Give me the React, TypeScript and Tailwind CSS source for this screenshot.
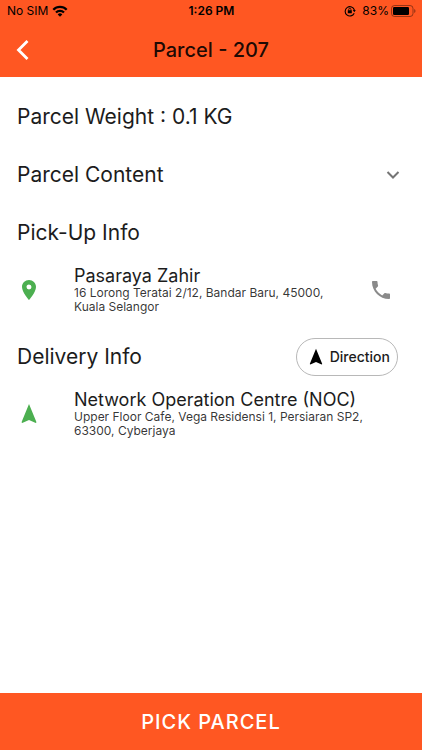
import type { ReactNode } from "react";
import { MdLocationOn, MdNavigation, MdPhone } from "react-icons/md";

function StatusBar() {
  return (
    <div className="grid h-[22px] grid-cols-3 items-center pr-[6px] pl-[7px] text-xs leading-4 text-black">
      <div className="flex items-center gap-1">
        <span>No SIM</span>
        <svg viewBox="0 0 16 12" className="h-3 w-4" aria-label="Wi-Fi">
          <g fill="none" stroke="currentColor" strokeWidth="2.300">
            <path d="M1.3 4.7a9.5 9.5 0 0 1 13.4 0" />
            <path d="M4 7.5a5.6 5.6 0 0 1 8 0" />
          </g>
          <path d="M8 11.7 5.7 9.4a3.2 3.2 0 0 1 4.6 0z" fill="currentColor" />
        </svg>
      </div>
      <span className="text-center font-semibold">1:26 PM</span>
      <div className="flex items-center justify-end">
        <svg viewBox="0 0 12 12" className="mr-[6px] h-3 w-3" aria-label="Rotation lock">
          <g fill="none" stroke="currentColor">
            <path d="M10.2 8.2A4.7 4.7 0 1 1 10.4 5" strokeWidth="1.1" />
            <path d="M4.7 5.6V4.4a1.1 1.1 0 0 1 2.2 0v1.2" strokeWidth=".8" />
          </g>
          <path d="M3.8 5.3h4v3h-4zM8.8 5h3L10.3 7.2z" fill="currentColor" />
        </svg>
        <span className="mr-[2px]">83%</span>
        <svg viewBox="0 0 25 12" className="h-3 w-[25px]" aria-label="Battery">
          <rect x=".5" y=".5" width="21.5" height="11" rx="3" fill="none" stroke="currentColor" strokeOpacity=".4" />
          <rect x="2" y="2" width="16" height="8" rx="1.2" fill="currentColor" />
          <path d="M23.3 4v4c1.5-.6 1.5-3.400 0-4z" fill="currentColor" fillOpacity=".5" />
        </svg>
      </div>
    </div>
  );
}

type StopProps = {
  icon: ReactNode;
  name: string;
  address: string;
  action?: ReactNode;
};

function Stop({ icon, name, address, action }: StopProps) {
  return (
    <div className="flex items-center px-[17px]">
      <div className="w-[57px] shrink-0">{icon}</div>
      <div className="min-w-0 flex-1 pr-5">
        <h3 className="text-lg leading-5">{name}</h3>
        <p className="text-xs leading-[14px] text-black/80">{address}</p>
      </div>
      {action}
    </div>
  );
}

export default function App() {
  return (
    <div className="flex min-h-screen flex-col bg-white font-['Inter',sans-serif] text-[#1c1c1c]">
      <header className="bg-[#ff5722]">
        <StatusBar />
        <div className="grid h-[55px] grid-cols-[1fr_auto_1fr] items-center px-4 text-black/90">
          <button type="button" aria-label="Back" className="justify-self-start text-white">
            <svg viewBox="0 0 14 24" className="h-6 w-[14px]" fill="none" stroke="currentColor" strokeWidth="2.800">
              <path d="M11.500 3 2.500 12l9 9" />
            </svg>
          </button>
          <h1 className="text-xl font-medium">Parcel - 207</h1>
        </div>
      </header>

      <main className="flex-1 pt-[11px]">
        <h2 className="flex h-[58px] items-center px-[17px] text-[21px] leading-7">Parcel Weight : 0.1 KG</h2>
        <button type="button" className="flex h-[58px] w-full items-center justify-between px-[17px] text-[21px] leading-7">
          Parcel Content
          <svg viewBox="0 0 24 24" className="size-6 text-[#757575]" fill="none" stroke="currentColor" strokeWidth="2">
            <path d="m6.500 9 5.500 5.500L17.500 9" />
          </svg>
        </button>
        <section>
          <h2 className="flex h-[58px] items-center px-[17px] text-[21px] leading-7">Pick-Up Info</h2>
          <div className="pt-1">
            <Stop
              icon={<MdLocationOn className="size-6 text-[#4caf50]" />}
              name="Pasaraya Zahir"
              address="16 Lorong Teratai 2/12, Bandar Baru, 45000, Kuala Selangor"
              action={
                <button type="button" aria-label="Call" className="mr-3 text-[#8a8a8a]">
                  <MdPhone className="size-6" />
                </button>
              }
            />
          </div>
        </section>
        <section className="pt-[10px]">
          <div className="flex h-[66px] items-center justify-between pr-6 pl-[17px]">
            <h2 className="text-[21px] leading-7">Delivery Info</h2>
            <button
              type="button"
              className="flex h-[38px] items-center gap-1 rounded-full border border-[#b8b8b8] pr-[7px] pl-[9px] text-sm font-medium"
            >
              <MdNavigation className="size-5 text-black" />
              Direction
            </button>
          </div>
          <Stop
            icon={<MdNavigation className="size-6 text-[#4caf50]" />}
            name="Network Operation Centre (NOC)"
            address="Upper Floor Cafe, Vega Residensi 1, Persiaran SP2, 63300, Cyberjaya"
          />
        </section>
      </main>

      <button type="button" className="h-[57px] bg-[#ff5722] text-xl font-medium tracking-wider text-white">
        PICK PARCEL
      </button>
    </div>
  );
}
